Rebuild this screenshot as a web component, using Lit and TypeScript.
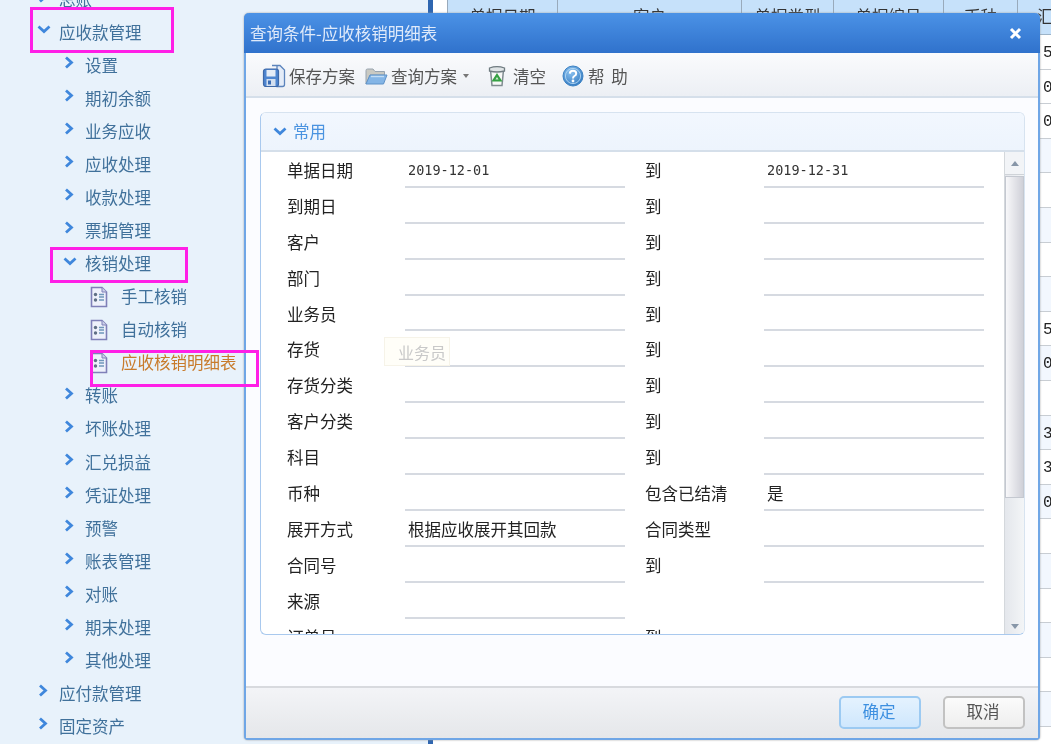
import { LitElement, html, css, svg } from "lit";
import { customElement } from "lit/decorators.js";

const chevR = svg`<svg class="chev" width="12" height="14" viewBox="0 0 12 14"><path d="M3 1.5 8.5 6.5 3 11.5" fill="none" stroke="#3f87dc" stroke-width="2.8"/></svg>`;
const chevD = svg`<svg class="chev" width="14" height="12" viewBox="0 0 14 12"><path d="M1.5 2.5 7 7.5 12.5 2.5" fill="none" stroke="#3f87dc" stroke-width="2.8"/></svg>`;
const doc = svg`<svg width="18" height="22" viewBox="0 0 18 22"><path d="M1.5 1.5H12L16.5 6V20.5H1.5Z" fill="#eef1fb" stroke="#7f80b8" stroke-width="1.6"/><path d="M12 1.5V6H16.5" fill="#cdd2ea" stroke="#7f80b8"/><circle cx="5.5" cy="8.5" r="1.7" fill="#5f6f84"/><circle cx="5.5" cy="14" r="1.7" fill="#5f6f84"/><path d="M9 8.5h5M9 11h5M9 14h5" stroke="#6f97ba" stroke-width="1.3"/></svg>`;
const save = svg`<svg width="24" height="24" viewBox="0 0 24 24"><path d="M10 1.5H18L22.5 6V20.5Q22.5 22.5 20.5 22.5H15V1.5Z" fill="#e4ecf8" stroke="#5c84bc" stroke-width="1.3"/><rect x="1.5" y="5" width="15" height="17.5" rx="2.5" fill="#4f86d0" stroke="#3f69a8" stroke-width="1.2"/><rect x="4.5" y="6" width="9" height="6.5" fill="#e6edf7"/><rect x="4.5" y="15" width="9" height="7" fill="#d4e0f0"/><rect x="6" y="16.5" width="3" height="4" fill="#3a6cb4"/></svg>`;
const folder = svg`<svg width="23" height="19" viewBox="0 0 23 19"><path d="M1 3.5Q1 2 2.5 2H8L10 4.5H19.5V8H5L1 17Z" fill="#c9c9c2" stroke="#98a4b0" stroke-width="1"/><path d="M5 8H22L18.5 17H1Z" fill="#84b5e6" stroke="#5f92c8" stroke-width="1"/><path d="M6 9.5H19" stroke="#c3ddf5" stroke-width="1.4"/></svg>`;
const trash = svg`<svg width="18" height="22" viewBox="0 0 18 22"><path d="M2.5 5 4 20.5H14L15.5 5Z" fill="#f7f8f7" stroke="#7f8b90" stroke-width="1.5"/><path d="M1.5 3Q9 .2 16.5 3V6Q9 8 1.5 6Z" fill="#dfe4e6" stroke="#6f7b80" stroke-width="1.3"/><path d="M9 10 12.5 15.5H5.5Z" fill="#cfe9cf" stroke="#35a043" stroke-width="2.2"/></svg>`;
const help = svg`<svg width="22" height="22" viewBox="0 0 22 22"><defs><radialGradient id="hg" cx=".4" cy=".3" r=".8"><stop offset="0" stop-color="#8cc2f0"/><stop offset="1" stop-color="#2b74bd"/></radialGradient></defs><circle cx="11" cy="11" r="10" fill="url(#hg)" stroke="#3c82c4" stroke-width="1"/><circle cx="11" cy="11" r="7.6" fill="none" stroke="#bfe0f7" stroke-width=".8"/><path d="M7.8 8.6Q8 5.8 11 5.8 14.2 5.8 14.2 8.4 14.2 10 12.4 11 11 11.8 11 13.4" fill="none" stroke="#fff" stroke-width="2"/><circle cx="11" cy="16" r="1.4" fill="#fff"/></svg>`;

type Node = { t: string; l: 1 | 2 | 3; k?: "o" | "d"; active?: boolean };
const tree: Node[] = [
  { t: "总账", l: 1 },
  { t: "应收款管理", l: 1, k: "o" },
  { t: "设置", l: 2 }, { t: "期初余额", l: 2 }, { t: "业务应收", l: 2 }, { t: "应收处理", l: 2 },
  { t: "收款处理", l: 2 }, { t: "票据管理", l: 2 },
  { t: "核销处理", l: 2, k: "o" },
  { t: "手工核销", l: 3, k: "d" }, { t: "自动核销", l: 3, k: "d" },
  { t: "应收核销明细表", l: 3, k: "d", active: true },
  { t: "转账", l: 2 }, { t: "坏账处理", l: 2 }, { t: "汇兑损益", l: 2 }, { t: "凭证处理", l: 2 },
  { t: "预警", l: 2 }, { t: "账表管理", l: 2 }, { t: "对账", l: 2 }, { t: "期末处理", l: 2 }, { t: "其他处理", l: 2 },
  { t: "应付款管理", l: 1 }, { t: "固定资产", l: 1 },
];

const cols = [110, 184, 92, 110, 74, 72];
const heads = ["单据日期", "客户", "单据类型", "单据编号", "币种", "汇率"];
const lastCol = ["5", "0", "0", "", "", "", "", "", "5", "0", "", "3", "3", "0", "", "", "", "", "", ""];

const form: [string, string, string, string][] = [
  ["单据日期", "2019-12-01", "到", "2019-12-31"],
  ["到期日", "", "到", ""], ["客户", "", "到", ""], ["部门", "", "到", ""], ["业务员", "", "到", ""],
  ["存货", "", "到", ""], ["存货分类", "", "到", ""], ["客户分类", "", "到", ""], ["科目", "", "到", ""],
  ["币种", "", "包含已结清", "是"], ["展开方式", "根据应收展开其回款", "合同类型", ""],
  ["合同号", "", "到", ""], ["来源", "", "", ""], ["订单号", "", "到", ""],
];

@customElement("app-root")
export class AppRoot extends LitElement {
  static styles = css`
    :host { display: block; position: relative; width: 1051px; height: 744px; overflow: hidden; background: #fff; filter: blur(.5px);
      font: 16.5px/1 "Noto Sans CJK SC", "Liberation Sans", sans-serif; }
    .page { display: flex; height: 744px; }
    .side { width: 428px; flex: none; background: #e8f2fb; overflow: hidden; }
    .tree { margin-top: -17.4px; }
    .node { display: flex; align-items: center; height: 33.05px; color: #40719b; white-space: nowrap; }
    .node .ic { flex: none; display: flex; align-items: center; }
    .l1 { padding-left: 37px; } .l1 .ic { width: 22px; }
    .l2 { padding-left: 63px; } .l2 .ic { width: 22px; }
    .l3 { padding-left: 90px; } .l3 .ic { width: 31px; }
    .l1 .chev, .l2 .chev { margin-top: -4px; }
    .active { color: #c87b2c; }
    .bar { width: 5px; flex: none; background: #2f66b0; }
    .gutter { width: 14px; flex: none; background: #fff; }
    .table { flex: 1; overflow: hidden; }
    .thead { display: flex; height: 35px; background: #c6e1fa; border-bottom: 1px solid #9db4c8; box-sizing: border-box; color: #333; }
    .thead div { flex: none; box-sizing: border-box; border-left: 1px solid #99aabb; text-align: center; line-height: 33px; white-space: nowrap; overflow: hidden; }
    .row { height: 34.6px; box-sizing: border-box; border-bottom: 1px solid #c8cdd3; display: flex; color: #222; }
    .row.alt { background: #f2f7fe; }
    .row div { flex: none; box-sizing: border-box; border-left: 1px solid #c8cdd3; height: 100%; font: 16px/37px "Liberation Mono", monospace; }
    .row .v { padding-left: 25px; width: 40px; }

    .dialog { position: absolute; left: 244px; top: 13px; width: 796px; height: 727px; box-sizing: border-box; border: 2px solid #6fa6e6; border-top: 0; border-radius: 5px 5px 4px 4px; background: #fbfcff; display: flex; flex-direction: column; box-shadow: 0 0 2px #9a9a9a; }
    .title { height: 40px; flex: none; margin: 0 -2px; padding: 0 0 0 6px; border-radius: 5px 5px 0 0; background: linear-gradient(#4b92e6, #3072cc); color: #dfeafa; display: flex; align-items: center; justify-content: space-between; }
    .title svg { margin-right: 18px; }
    .toolbar { height: 45px; flex: none; box-sizing: border-box; padding: 3px 0 0 16px; border-bottom: 2px solid #d5dfea; background: linear-gradient(#fafbfd, #eceff4); display: flex; align-items: center; color: #555; white-space: nowrap; }
    .toolbar svg { flex: none; }
    .tool-ic { display: flex; flex: none; }
    .caret { width: 0; height: 0; border: 3.5px solid transparent; border-top: 4px solid #777; border-bottom: 0; margin-left: 6px; }
    .save { margin-right: 3px; }
    .open { margin: 0 3px 0 10px; }
    .clear { margin: 0 7px 0 19px; }
    .hlp { margin: 0 4px 0 16px; }
    .help-text { word-spacing: 3px; }
    .panel { height: 523px; width: 765px; flex: none; box-sizing: border-box; margin: 14px 0 0 14px; border: 1.5px solid #a9c9ee; border-top-color: #d7e3f0; border-right-color: #d7e3f0; border-radius: 6px; overflow: hidden; display: flex; flex-direction: column; background: #fff; }
    .phead { height: 39px; flex: none; box-sizing: border-box; background: linear-gradient(#f2f7fe, #edf4fd); border-bottom: 2px solid #d5dfea; color: #4a93e0; display: flex; align-items: center; padding-left: 12px; gap: 6px; }
    .pbody { flex: 1; min-height: 0; display: flex; }
    .fields { flex: 1; overflow: hidden; }
    .grid { display: grid; grid-template-columns: 118px 220px 139px 220px; padding-left: 26px; grid-auto-rows: 35.9px; color: #222; }
    .lab { line-height: 37px; white-space: nowrap; }
    .lab2 { line-height: 37px; margin-left: 20px; white-space: nowrap; }
    .inp { border-bottom: 2px solid #d6dae1; box-sizing: border-box; padding-left: 3px; line-height: 37px; white-space: nowrap; }
    .inp.date { font: 13.5px/37px "DejaVu Sans Mono", monospace; color: #333; }
    .sb { width: 20px; flex: none; background: linear-gradient(90deg, #e4e7ec, #f3f5f7); display: flex; flex-direction: column; align-items: center; box-sizing: border-box; border-left: 1px solid #d4d8dc; }
    .sb .up { height: 23px; width: 100%; box-sizing: border-box; border-bottom: 1px solid #cfd3d8; background: #f2f4f7; display: flex; align-items: center; justify-content: center; }
    .tri-u { width: 0; height: 0; border: 4.5px solid transparent; border-bottom: 5px solid #8796a8; border-top: 0; }
    .tri-d { width: 0; height: 0; border: 4.5px solid transparent; border-top: 5px solid #8796a8; border-bottom: 0; margin: auto 0 5px; }
    .thumb { height: 322px; width: 100%; box-sizing: border-box; border: 1px solid #c4c8d0; background: linear-gradient(90deg, #f8f8fa, #cfd0d8); margin-top: 1px; }
    .spacer { flex: 1; }
    .footer { height: 52px; flex: none; box-sizing: border-box; border-top: 2px solid #d8dade; background: linear-gradient(#f3f4f7, #e5e7ea); display: flex; justify-content: flex-end; padding: 8px 13px 0 0; gap: 22px; }
    .btn { width: 82px; height: 33px; box-sizing: border-box; border-radius: 5px; padding: 0 2px 2px 0; display: flex; align-items: center; justify-content: center; }
    .ok { border: 2px solid #9ccaf2; background: linear-gradient(#e4f2fe, #cfe7fd); color: #3c8fe0; }
    .cancel { border: 2px solid #c2c2c2; background: linear-gradient(#fbfbfb, #eeeeee); color: #555; }
    .tip { position: absolute; left: 384px; top: 337px; width: 66px; height: 29px; box-sizing: border-box; background: #fffef8; border: 1px solid #f6f3e8; color: #c9c9c9; padding-left: 13px; line-height: 28px; white-space: nowrap; font-size: 16px; }
    .mark { position: absolute; box-sizing: border-box; border: 3px solid #ff1fe6; pointer-events: none; }
    .m1 { left: 30px; top: 7px; width: 144px; height: 46px; }
    .m2 { left: 50px; top: 247px; width: 138px; height: 36px; }
    .m3 { left: 90px; top: 350px; width: 169px; height: 37px; }
  `;

  render() {
    return html`
      <div class="page">
        <nav class="side"><div class="tree">
          ${tree.map((n) => html`<div class="node l${n.l} ${n.active ? "active" : ""}">
            <span class="ic">${n.k === "d" ? doc : n.k === "o" ? chevD : chevR}</span><span>${n.t}</span></div>`)}
        </div></nav>
        <div class="bar"></div>
        <div class="gutter"></div>
        <div class="table">
          <div class="thead">${heads.map((h, i) => html`<div style="width:${cols[i]}px">${h}</div>`)}</div>
          ${lastCol.map((v, i) => html`<div class="row ${i >= 3 && i % 2 === 1 ? "alt" : ""}">
            ${cols.slice(0, 5).map((w) => html`<div style="width:${w}px"></div>`)}<div class="v">${v}</div></div>`)}
        </div>
      </div>

      <section class="dialog">
        <header class="title"><span>查询条件-应收核销明细表</span>
          <svg width="13" height="13" viewBox="0 0 13 13"><path d="M2 2 11 11M11 2 2 11" stroke="#fff" stroke-width="3"/></svg></header>
        <div class="toolbar">
          <span class="tool-ic save">${save}</span><span>保存方案</span>
          <span class="tool-ic open">${folder}</span><span>查询方案</span><i class="caret"></i>
          <span class="tool-ic clear">${trash}</span><span>清空</span>
          <span class="tool-ic hlp">${help}</span><span class="help-text">帮 助</span>
        </div>
        <div class="panel">
          <div class="phead">${chevD}<span>常用</span></div>
          <div class="pbody">
            <div class="fields"><div class="grid">
              ${form.map(([a, b, c, d]) => html`
                <div class="lab">${a}</div>
                <div class="inp ${b.startsWith("2019") ? "date" : ""}">${b}</div>
                <div class="lab2">${c}</div>
                ${c ? html`<div class="inp ${d.startsWith("2019") ? "date" : ""}">${d}</div>` : html`<div></div>`}`)}
            </div></div>
            <div class="sb"><div class="up"><i class="tri-u"></i></div><div class="thumb"></div><i class="tri-d"></i></div>
          </div>
        </div>
        <div class="spacer"></div>
        <div class="footer"><div class="btn ok">确定</div><div class="btn cancel">取消</div></div>
      </section>

      <div class="tip">业务员</div>
      <div class="mark m1"></div><div class="mark m2"></div><div class="mark m3"></div>
    `;
  }
}
